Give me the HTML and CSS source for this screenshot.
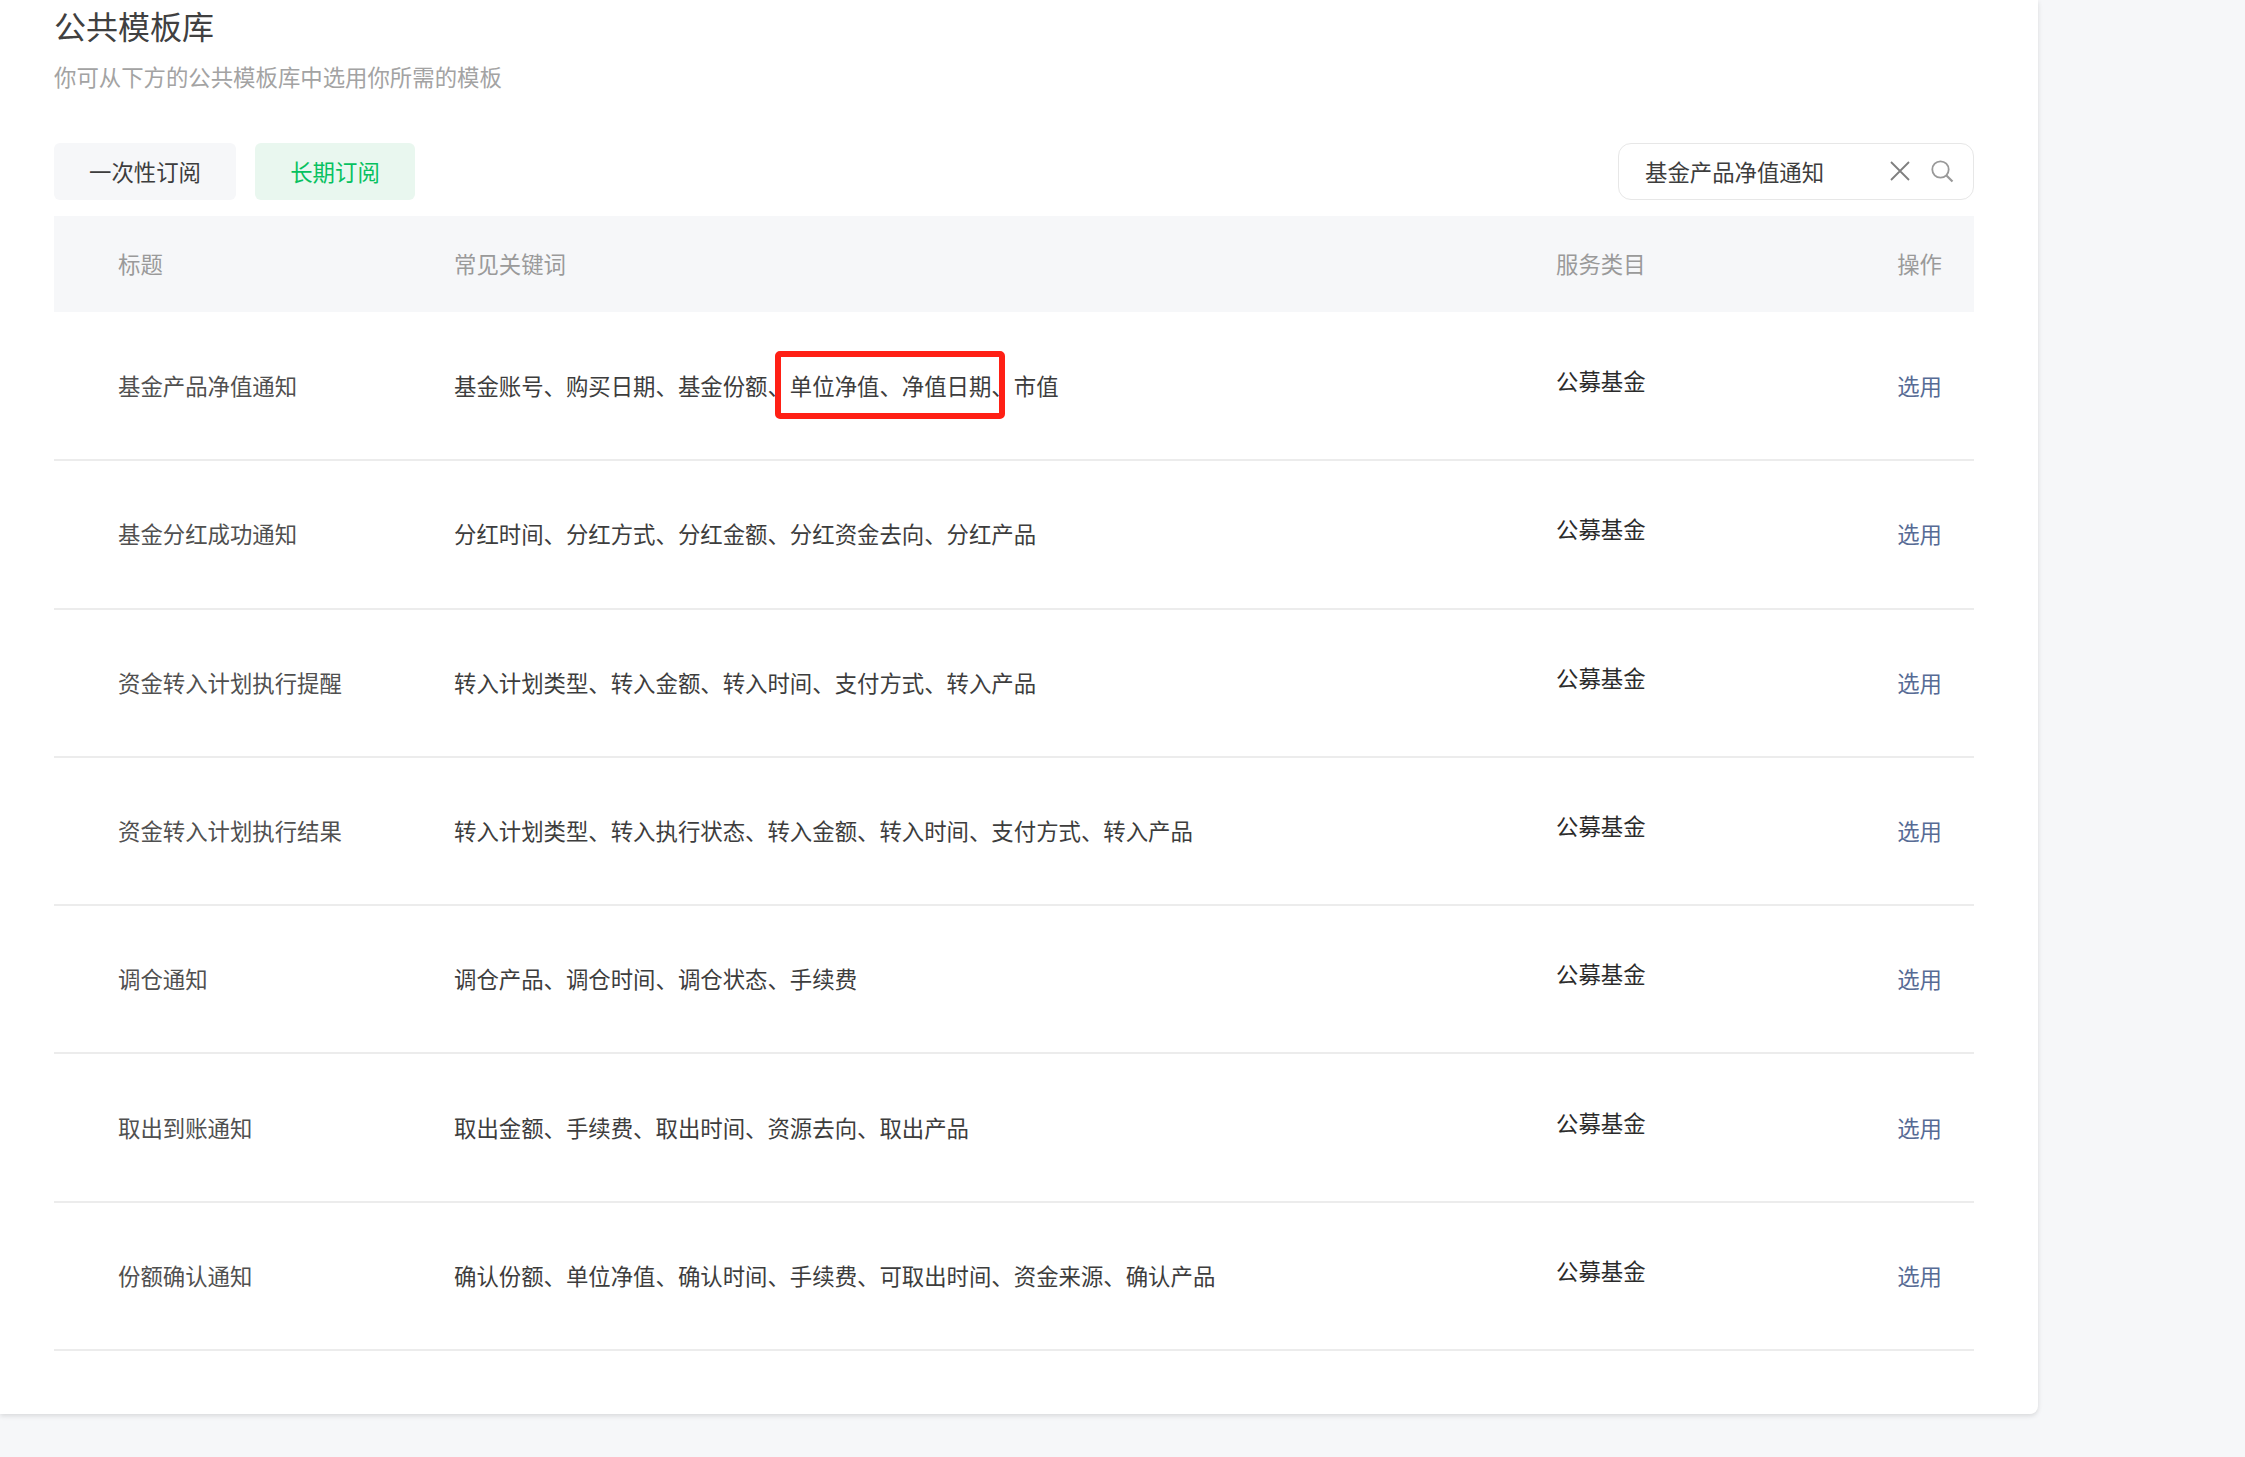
FILE: index.html
```html
<!DOCTYPE html>
<html lang="zh-CN">
<head>
  <meta charset="UTF-8" />
  <title>公共模板库</title>
  <link rel="stylesheet" href="styles.css">
</head>
<body>
  <div class="panel">
    <h1>公共模板库</h1>
    <p class="desc">你可从下方的公共模板库中选用你所需的模板</p>

    <div class="toolbar">
      <div class="tabs">
        <a class="tab">一次性订阅</a>
        <a class="tab tab-active">长期订阅</a>
      </div>
      <div class="search">
        <span class="search-text">基金产品净值通知</span>
        <svg class="icon-close" width="20" height="20" viewBox="0 0 20 20"><path d="M1 1 19 19M19 1 1 19" fill="none" stroke="#7f7f7f" stroke-width="1.8"/></svg>
        <svg class="icon-search" width="24" height="24" viewBox="0 0 24 24"><circle cx="10.5" cy="10.5" r="8.2" fill="none" stroke="#999" stroke-width="1.8"/><path d="M16.5 16.5 22.5 22.5" fill="none" stroke="#999" stroke-width="2.2"/></svg>
      </div>
    </div>

    <table class="list">
      <colgroup>
        <col class="col-title"><col class="col-keywords"><col class="col-service"><col class="col-action">
      </colgroup>
      <thead>
        <tr><th>标题</th><th>常见关键词</th><th>服务类目</th><th class="action">操作</th></tr>
      </thead>
      <tbody>
        <tr>
          <td class="name">基金产品净值通知</td>
          <td class="keywords"><span class="mark"></span>基金账号、购买日期、基金份额、单位净值、净值日期、市值</td>
          <td class="service">公募基金</td>
          <td class="action"><a>选用</a></td>
        </tr>
        <tr>
          <td class="name">基金分红成功通知</td>
          <td class="keywords">分红时间、分红方式、分红金额、分红资金去向、分红产品</td>
          <td class="service">公募基金</td>
          <td class="action"><a>选用</a></td>
        </tr>
        <tr>
          <td class="name">资金转入计划执行提醒</td>
          <td class="keywords">转入计划类型、转入金额、转入时间、支付方式、转入产品</td>
          <td class="service">公募基金</td>
          <td class="action"><a>选用</a></td>
        </tr>
        <tr>
          <td class="name">资金转入计划执行结果</td>
          <td class="keywords">转入计划类型、转入执行状态、转入金额、转入时间、支付方式、转入产品</td>
          <td class="service">公募基金</td>
          <td class="action"><a>选用</a></td>
        </tr>
        <tr>
          <td class="name">调仓通知</td>
          <td class="keywords">调仓产品、调仓时间、调仓状态、手续费</td>
          <td class="service">公募基金</td>
          <td class="action"><a>选用</a></td>
        </tr>
        <tr>
          <td class="name">取出到账通知</td>
          <td class="keywords">取出金额、手续费、取出时间、资源去向、取出产品</td>
          <td class="service">公募基金</td>
          <td class="action"><a>选用</a></td>
        </tr>
        <tr>
          <td class="name">份额确认通知</td>
          <td class="keywords">确认份额、单位净值、确认时间、手续费、可取出时间、资金来源、确认产品</td>
          <td class="service">公募基金</td>
          <td class="action"><a>选用</a></td>
        </tr>
      </tbody>
    </table>
  </div>
</body>
</html>
```

FILE: styles.css
```css
html, body { margin: 0; padding: 0; }
body { background: #f6f7f9; color: #3d3d3d; font-family: "Noto Sans CJK SC", "Noto Sans", sans-serif; font-size: 22.4px; height: 1457px; overflow: hidden; }

.panel { box-sizing: border-box; width: 2038px; height: 1414px; padding: 3px 64px 0 54px; background: #fff; border-radius: 0 0 8px 0; box-shadow: 0 2px 5px rgba(0,0,0,0.12); }

h1 { margin: 0; font-size: 32px; font-weight: 400; line-height: 44px; color: #404040; }
.desc { margin: 13px 0 0; line-height: 32px; color: #a3a3a3; }

.toolbar { display: flex; justify-content: space-between; margin-top: 51px; }
.tabs { display: flex; gap: 19px; }
.tab { box-sizing: border-box; display: flex; align-items: center; justify-content: center; height: 57px; padding-bottom: 2px; border-radius: 6px; background: #f6f7f9; color: #3d3d3d; }
.tab:first-child { width: 182px; }
.tab-active { width: 160px; background: #e9f7ef; color: #07c160; }

.search { box-sizing: border-box; display: flex; align-items: center; width: 356px; height: 57px; padding: 0 19px 0 26px; border: 1px solid #e7e7e7; border-radius: 13px; }
.search-text { flex: 1; padding-bottom: 2px; }
.icon-close { margin: 0 20px 2px 0; }
.icon-search { margin-bottom: 2px; }

.list { width: 1920px; margin-top: 16px; border-collapse: collapse; table-layout: fixed; }
.col-title { width: 400px; }
.col-keywords { width: 1102px; }
.col-service { width: 300px; }
.col-action { width: 118px; }

th { box-sizing: border-box; height: 96px; padding: 0 0 2px; background: #f6f7f9; color: #9a9a9a; font-weight: 400; text-align: left; }
th:first-child { padding-left: 64px; }
td { box-sizing: border-box; height: 148.3px; padding: 0 0 2px; border-bottom: 2px solid #ececec; }
td.name { padding-left: 64px; color: #505050; }
td.keywords { position: relative; color: #3d3d3d; }
td.service { padding-bottom: 12px; color: #2b2b2b; }
.action { padding-right: 32px; text-align: right; }
td.action { padding: 0 32px 2px 0; }
td.action a { color: #576b95; }

.mark { position: absolute; left: 321px; top: 39px; width: 230px; height: 68px; box-sizing: border-box; border: 6px solid #ff2015; border-radius: 5px; }
```
